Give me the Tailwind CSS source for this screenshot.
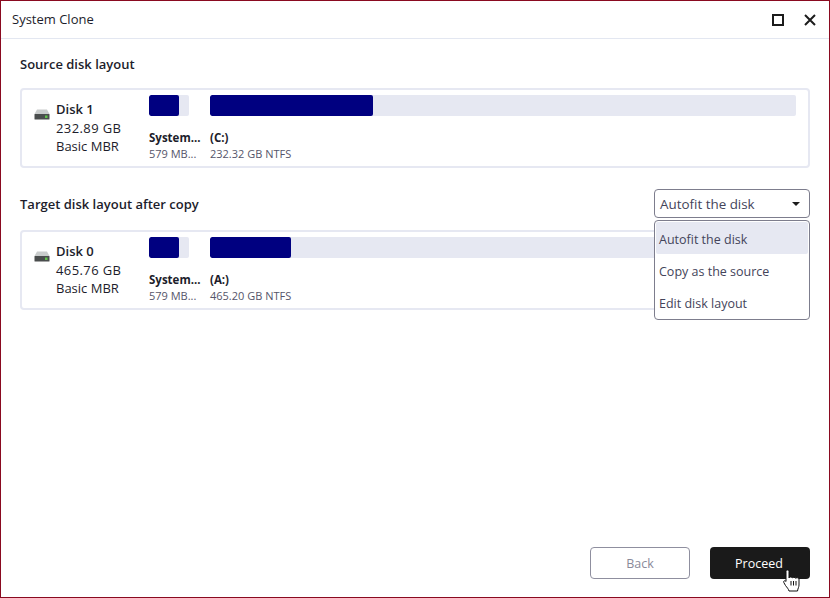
<!DOCTYPE html>
<html lang="en">
  <head>
    <meta charset="UTF-8" />
    <title>System Clone</title>
    <script src="https://cdn.jsdelivr.net/npm/@tailwindcss/browser@4"></script>
  </head>
  <body class="bg-white font-['Open_Sans','Noto_Sans',sans-serif] text-[#1d1d2b]">
    <div class="w-[830px] h-[598px] border border-[#8a0a20] flex flex-col overflow-hidden">
      <!-- title bar -->
      <div class="h-[38px] shrink-0 border-b border-[#e3e7f1] flex items-center pl-[11px] pr-[13px] text-[13px]">
        <span>System Clone</span>
        <div class="ml-auto flex items-center gap-[20px]">
          <div class="w-[12px] h-[12px] border-2 border-[#1c1c1c]"></div>
          <svg width="12" height="12" viewBox="0 0 12 12"><path d="M1 1l10 10M11 1L1 11" stroke="#1c1c1c" stroke-width="2" fill="none" /></svg>
        </div>
      </div>

      <div class="flex-1 flex flex-col px-[19px] relative">
        <h2 class="mt-[15px] h-[20px] leading-[20px] text-[13px] font-semibold">Source disk layout</h2>

        <div class="mt-[14px] h-[80px] border-2 border-[#e6e8f2] rounded-[4px] flex pl-[12px] pr-[12px]">
          <div class="w-[115px] shrink-0 flex pt-[10px]">
            <svg class="mt-[8px] mr-[6px] shrink-0" width="16" height="12" viewBox="0 0 16 12">
              <path d="M3 1.500h10L15.500 6H.5z" fill="#c9cccc" />
              <rect x="0.5" y="6" width="15" height="5.5" rx="0.5" fill="#4a4d4d" />
              <rect x="11" y="7.5" width="2.5" height="2.5" fill="#5fc24a" />
            </svg>
            <div class="text-[13px] leading-[18.5px]">
              <div class="font-semibold">Disk 1</div>
              <div class="tracking-[0.4px]">232.89 GB</div>
              <div>Basic MBR</div>
            </div>
          </div>
          <div class="w-[40px] shrink-0 mr-[21px] pt-[5px]">
            <div class="h-[21px] bg-[#e6e8f2] rounded-[2px] overflow-hidden"><div class="h-full w-[30px] bg-[#000080] rounded-[2px]"></div></div>
            <div class="mt-[14px] text-[11.5px] leading-[15px] font-bold whitespace-nowrap">System...</div>
            <div class="mt-[1px] text-[11px] leading-[15px] text-[#55556a] whitespace-nowrap">579 MB...</div>
          </div>
          <div class="flex-1 pt-[5px]">
            <div class="h-[21px] bg-[#e6e8f2] rounded-[2px] overflow-hidden"><div class="h-full w-[163px] bg-[#000080] rounded-[2px]"></div></div>
            <div class="mt-[14px] text-[11.5px] leading-[15px] font-bold">(C:)</div>
            <div class="mt-[1px] text-[11px] leading-[15px] text-[#55556a]">232.32 GB NTFS</div>
          </div>
        </div>

        <div class="mt-[21px] h-[29px] flex items-center justify-between">
          <h2 class="pt-[2px] text-[13px] font-semibold">Target disk layout after copy</h2>
          <div class="w-[156px] h-[29px] border border-[#7d7d8d] rounded-[4px] flex items-center justify-between pl-[5px] pr-[9px] text-[13.4px] text-[#44445a]">
            <span class="pt-[1px]">Autofit the disk</span>
            <span class="w-0 h-0 border-x-[4px] border-x-transparent border-t-[4px] border-t-[#1c1c1c]"></span>
          </div>
        </div>

        <div class="mt-[12px] h-[80px] border-2 border-[#e6e8f2] rounded-[4px] flex pl-[12px] pr-[12px]">
          <div class="w-[115px] shrink-0 flex pt-[10px]">
            <svg class="mt-[8px] mr-[6px] shrink-0" width="16" height="12" viewBox="0 0 16 12">
              <path d="M3 1.500h10L15.500 6H.5z" fill="#c9cccc" />
              <rect x="0.5" y="6" width="15" height="5.5" rx="0.5" fill="#4a4d4d" />
              <rect x="11" y="7.5" width="2.5" height="2.5" fill="#5fc24a" />
            </svg>
            <div class="text-[13px] leading-[18.5px]">
              <div class="font-semibold">Disk 0</div>
              <div class="tracking-[0.4px]">465.76 GB</div>
              <div>Basic MBR</div>
            </div>
          </div>
          <div class="w-[40px] shrink-0 mr-[21px] pt-[5px]">
            <div class="h-[21px] bg-[#e6e8f2] rounded-[2px] overflow-hidden"><div class="h-full w-[30px] bg-[#000080] rounded-[2px]"></div></div>
            <div class="mt-[14px] text-[11.5px] leading-[15px] font-bold whitespace-nowrap">System...</div>
            <div class="mt-[1px] text-[11px] leading-[15px] text-[#55556a] whitespace-nowrap">579 MB...</div>
          </div>
          <div class="flex-1 pt-[5px]">
            <div class="h-[21px] bg-[#e6e8f2] rounded-[2px] overflow-hidden"><div class="h-full w-[81px] bg-[#000080] rounded-[2px]"></div></div>
            <div class="mt-[14px] text-[11.5px] leading-[15px] font-bold">(A:)</div>
            <div class="mt-[1px] text-[11px] leading-[15px] text-[#55556a]">465.20 GB NTFS</div>
          </div>
        </div>

        <!-- dropdown menu -->
        <div class="absolute left-[653px] top-[181px] w-[156px] h-[100px] bg-white border border-[#7d7d8d] rounded-[4px] p-[1px] text-[12.5px] text-[#44445a]">
          <div class="h-[32px] pt-[4px] bg-[#e6e8f2] rounded-[2px] flex items-center pl-[3px]">Autofit the disk</div>
          <div class="h-[32px] pt-[4px] flex items-center pl-[3px]">Copy as the source</div>
          <div class="h-[32px] pt-[4px] flex items-center pl-[3px]">Edit disk layout</div>
        </div>

        <!-- footer buttons -->
        <div class="mt-auto mb-[18px] flex justify-end gap-[20px] text-[12.5px]">
          <button class="w-[100px] h-[32px] pt-[3px] border border-[#8f8f9f] rounded-[4px] text-[#8a8a9a]">Back</button>
          <button class="w-[100px] h-[32px] pt-[3px] pr-[2px] bg-[#1a1a1a] rounded-[4px] text-white">Proceed</button>
        </div>

        <!-- mouse cursor -->
        <svg class="absolute left-[782px] top-[530px]" width="18" height="24" viewBox="0 0 18 24">
          <path d="M3 2.500c0-2 3-2 3 0V9c.3-1.300 3-1.300 3.300 0c.3-1 3-1 3.300.3c.3-.8 3.400-.8 3.400 .7v6c0 2-1 3-1.500 6H6c-.5-2-2-3.500-3.500-5.500L.8 13.500c-.7-1.500 1-2.500 2.200-1z" fill="#fff" stroke="#111" stroke-width="1" stroke-linejoin="round" />
          <path d="M8 12v4.500M10.500 12v4.500M13 12v4.500" stroke="#111" stroke-width="1" fill="none" />
        </svg>
      </div>
    </div>
  </body>
</html>
